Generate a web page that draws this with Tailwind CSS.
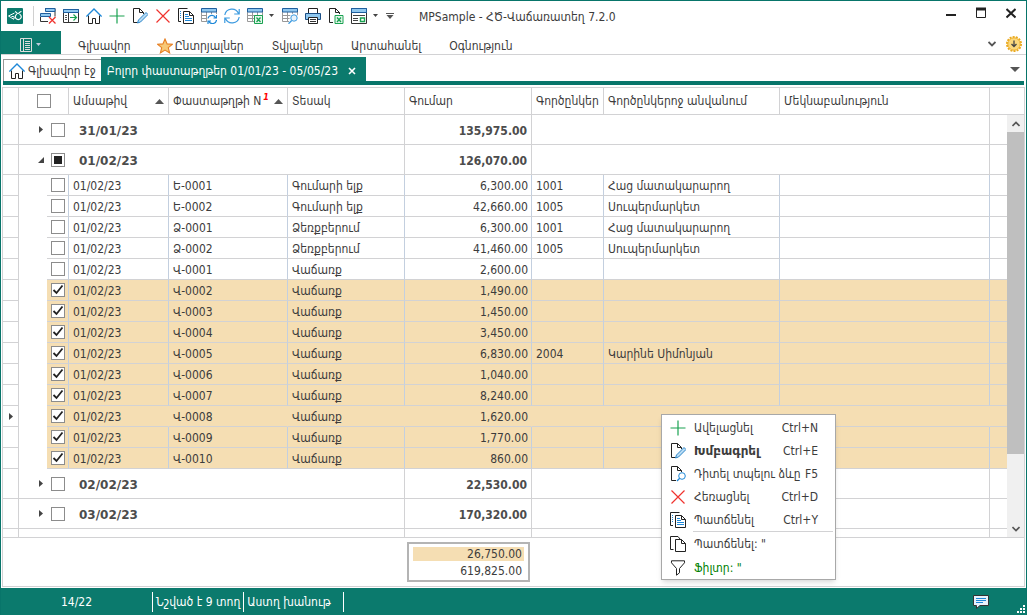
<!DOCTYPE html>
<html lang="hy">
<head>
<meta charset="utf-8">
<title>MPSample - ՀԾ-Վաճառատեղ 7.2.0</title>
<script src="https://cdn.jsdelivr.net/npm/@tailwindcss/browser@4"></script>
</head>
<body class="h-screen overflow-hidden bg-white font-['DejaVu_Sans_Condensed','DejaVu_Sans',sans-serif] text-xs text-[#3c3c3c]">

<svg class="hidden">
  <symbol id="closeall" viewBox="0 0 16 16"><path d="M5 .5h10v8" fill="none" stroke="#333"/><path d="M5.500 .5h9.500v3H5.500z" fill="#8fc7ee" stroke="#1f5f9f"/><path d="M.5 5.500h10v3H.5z" fill="#8fc7ee" stroke="#1f5f9f"/><path d="M.5 9v4.500H8" fill="none" stroke="#333"/><path d="M9 9l6.500 6.500M15.500 9L9 15.500" stroke="#f0332e" stroke-width="1.300"/></symbol>
  <symbol id="panel" viewBox="0 0 16 16"><path d="M.5 1.500h15v13H.5z" fill="#fff" stroke="#333"/><path d="M.5 1.500h15v3H.5z" fill="#8fc7ee" stroke="#1f5f9f"/><path d="M5.500 5v9" stroke="#333"/><path d="M2 7.500h2M2 9.500h2M2 11.500h2" stroke="#555"/><path d="M7 9.500h6M10.500 6.500l3 3-3 3" stroke="#1aa251" stroke-width="1.200" fill="none"/></symbol>
  <symbol id="house" viewBox="0 0 16 16"><path d="M2.500 7.500v8h4v-5h3v5h4v-8" fill="none" stroke="#222"/><path d="M.4 8.600L8 1l7.600 7.600" fill="none" stroke="#1e88d8" stroke-width="1.400"/></symbol>
  <symbol id="plus" viewBox="0 0 16 16"><path d="M8 .5v15M.5 8h15" stroke="#1aa251" stroke-width="1.200"/></symbol>
  <symbol id="edit" viewBox="0 0 16 16"><path d="M6 14.500H1.500v-14h6l4 4V6M7.500.5v4h4" fill="none" stroke="#222"/><path d="M5.500 15l1-3 7.500-7.500 2 2L8.500 14z" fill="#b9dcf4" stroke="#2a85c8"/></symbol>
  <symbol id="cross" viewBox="0 0 16 16"><path d="M1.500 1.500l13 13M14.500 1.500l-13 13" stroke="#f0332e" stroke-width="1.200"/></symbol>
  <symbol id="copyline" viewBox="0 0 16 16"><path d="M3 13.500H.5V.5h9" fill="none" stroke="#222"/><path d="M2 3.500h2M2 5.500h2M2 7.500h2M2 9.500h2" stroke="#1e88d8" stroke-dasharray="1 1"/><path d="M5.500 3.500h6l4 4v8h-10zM11.500 3.500v4h4" fill="#fff" stroke="#222"/><path d="M7 6.500h3M7 8.500h4M7 10.500h7M7 12.500h7" stroke="#1e88d8"/></symbol>
  <symbol id="copy" viewBox="0 0 16 16"><path d="M3.500 13.500H.5V.5h7.500L10 3" fill="none" stroke="#222"/><path d="M5.500 3.500h6l4 4v8h-10zM11.500 3.500v4h4" fill="#fff" stroke="#222"/></symbol>
  <symbol id="grid" viewBox="0 0 16 16"><path d="M.5 4v9.500H7M.5 7.500H15M.5 10.500H9M5.500 4v9.500M10.500 4v5M15.500 4v5" fill="none" stroke="#999"/><path d="M.5 .5h15v3.500H.5z" fill="#8fc7ee" stroke="#1f5f9f"/></symbol>
  <symbol id="gridrefresh" viewBox="0 0 16 16"><use href="#grid"/><path d="M6 6h10v10H6z" fill="#fff"/><path d="M7 10.500a4 4 0 0 1 7.500-1M15.500 7v3h-3M15.500 12a4 4 0 0 1-7.500 1.500M7 16v-3h3" fill="none" stroke="#1e88d8" stroke-width="1.200"/></symbol>
  <symbol id="refresh" viewBox="0 0 16 16"><path d="M.8 7A7.200 7.200 0 0 1 14.500 5.500M15.200 1v5h-5M15.200 9a7.200 7.200 0 0 1-13.700 1.500M.8 15v-5h5" fill="none" stroke="#3d9be0" stroke-width="1.200"/></symbol>
  <symbol id="gridx" viewBox="0 0 16 16"><use href="#grid"/><path d="M7.500 7.500h8v8h-8z" fill="#e6f6ec" stroke="#1aa251"/><path d="M9.500 9.500l4 4.500M13.500 9.500l-4 4.500" stroke="#1aa251" stroke-width="1.300"/></symbol>
  <symbol id="gridfind" viewBox="0 0 16 16"><use href="#grid"/><circle cx="12" cy="10" r="4.500" fill="#fff"/><circle cx="12" cy="10" r="3.200" fill="#e8f4fc" stroke="#3d9be0"/><path d="M9.700 12.500L6.500 15.700" stroke="#3d9be0" stroke-width="1.400"/></symbol>
  <symbol id="printer" viewBox="0 0 16 16"><path d="M3.500 5V.5h9V5" fill="#fff" stroke="#222"/><path d="M.5 5.500h15v6H.5z" fill="#8fc7ee" stroke="#1b4f86"/><path d="M3.500 9.500h9v6h-9z" fill="#fff" stroke="#222"/><path d="M5 11.500h6M5 13.500h6" stroke="#333"/></symbol>
  <symbol id="pagex" viewBox="0 0 16 16"><path d="M5 14.500H1.500v-14h6l4 4V6M7.500.5v4h4" fill="none" stroke="#222"/><path d="M7 7.500h8v8H7z" fill="#e6f6ec" stroke="#1aa251"/><path d="M9 9.500l4 4.500M13 9.500L9 14" stroke="#1aa251" stroke-width="1.300"/></symbol>
  <symbol id="pagefind" viewBox="0 0 16 16"><path d="M6 14.500H1.500v-14h6l4 4V6M7.500.5v4h4" fill="none" stroke="#222"/><circle cx="12" cy="10" r="3.300" fill="#fff" stroke="#1e88d8"/><path d="M9.700 12.300L7 15" stroke="#1e88d8" stroke-width="1.300"/></symbol>
  <symbol id="report" viewBox="0 0 16 16"><path d="M.5 .5h15v15H.5z" fill="#fff" stroke="#333"/><path d="M.5 .5h15v4H.5z" fill="#8fc7ee" stroke="#1f5f9f"/><path d="M2 7.500h12M2 10.500h5M2 12.500h5" stroke="#444"/><path d="M9.500 10h4v3.500h-4z" fill="none" stroke="#1aa251" stroke-width="1.400"/></symbol>
  <symbol id="funnel" viewBox="0 0 16 16"><path d="M1.500 .8h13v2L9.500 8.500v4.300l-3 2.400V8.500L1.500 2.800z" fill="none" stroke="#222"/></symbol>
  <symbol id="caret" viewBox="0 0 6 4"><path d="M0 0h5L2.500 3z" fill="#444"/></symbol>
</svg>

<div class="relative flex h-full flex-col border-x border-t border-[#08756a]">

  <!-- Quick access and window title -->
  <header class="flex h-8 shrink-0 items-center pb-0.5 pl-1.5 pr-2.5">
    <svg class="h-4 w-4" viewBox="0 0 16 16"><rect width="16" height="16" rx="1" fill="#0b7a6d"/><path d="M7.500 5L1.500 8l5 3.200M4.500 8.500h1.500a1.300 1.300 0 0 1 0 2.600" fill="none" stroke="#fff"/><path d="M8 3.500c1 0 1.500 2 3 2s1.500-2 3.500-2M10 6.200a3 2.800 0 1 0 2.500 0" fill="none" stroke="#fff" stroke-width="1.200"/></svg>
    <span class="ml-2.5 h-5 w-px bg-[#d0d0d0]"></span>
    <div class="ml-1.5 flex items-center gap-[7px]">
      <button aria-label="Փակել բոլորը"><svg class="h-4 w-4"><use href="#closeall"/></svg></button>
      <button aria-label="Վահանակ"><svg class="h-4 w-4"><use href="#panel"/></svg></button>
      <button aria-label="Գլխավոր էջ"><svg class="h-4 w-4"><use href="#house"/></svg></button>
      <button aria-label="Ավելացնել"><svg class="h-4 w-4"><use href="#plus"/></svg></button>
      <button aria-label="Խմբագրել"><svg class="h-4 w-4"><use href="#edit"/></svg></button>
      <button aria-label="Հեռացնել"><svg class="h-4 w-4"><use href="#cross"/></svg></button>
      <button aria-label="Պատճենել"><svg class="h-4 w-4"><use href="#copyline"/></svg></button>
      <button aria-label="Թարմացնել ցուցակը"><svg class="h-4 w-4"><use href="#gridrefresh"/></svg></button>
      <button aria-label="Թարմացնել"><svg class="h-4 w-4"><use href="#refresh"/></svg></button>
      <button class="flex items-center gap-1.5" aria-label="Արտահանել"><svg class="h-4 w-4"><use href="#gridx"/></svg><svg class="h-1 w-1.5"><use href="#caret"/></svg></button>
      <button aria-label="Որոնել"><svg class="h-4 w-4"><use href="#gridfind"/></svg></button>
      <button aria-label="Տպել"><svg class="h-4 w-4"><use href="#printer"/></svg></button>
      <button aria-label="Excel"><svg class="h-4 w-4"><use href="#pagex"/></svg></button>
      <button class="flex items-center gap-1.5" aria-label="Հաշվետվություն"><svg class="h-4 w-4"><use href="#report"/></svg><svg class="h-1 w-1.5"><use href="#caret"/></svg></button>
      <button aria-label="Կարգավորել"><svg class="h-1.5 w-2" viewBox="0 0 8 6"><path d="M0 .5h8" stroke="#555"/><path d="M.5 2h7L4 6z" fill="#555"/></svg></button>
    </div>
    <h1 class="ml-[25px] flex-1 whitespace-nowrap pt-0.5">MPSample - ՀԾ-Վաճառատեղ 7.2.0</h1>
    <div class="flex items-center gap-5 pb-1.5">
      <button aria-label="Ծալել"><svg class="h-3 w-2.5" viewBox="0 0 10 12"><path d="M0 8h10" stroke="#222" stroke-width="2"/></svg></button>
      <button aria-label="Մեծացնել"><svg class="h-3 w-2.5" viewBox="0 0 10 12"><path d="M.5 1.500h9v9h-9z" fill="none" stroke="#222"/><path d="M0 2h10" stroke="#222" stroke-width="3"/></svg></button>
      <button aria-label="Փակել"><svg class="h-3 w-2.5" viewBox="0 0 10 12"><path d="M.5 2l9 8.500M9.500 2l-9 8.500" stroke="#222" stroke-width="2"/></svg></button>
    </div>
  </header>

  <!-- Ribbon tabs -->
  <nav class="flex h-[22px] shrink-0 items-center border-b border-[#d2d2d4] pr-1">
    <button class="-mt-0.5 flex h-[23px] w-15 items-center justify-center gap-1 bg-[#0b7a6d] pt-1" aria-label="Ֆայլ"><svg class="h-3.5 w-3" viewBox="0 0 12 14"><path d="M.5 .5h11v13H.5z" fill="none" stroke="#ddd"/><path d="M3.500 0v14" stroke="#ddd"/><path d="M5 3.500h5M5 5.500h5M5 7.500h5M5 9.500h5M5 11.500h5" stroke="#ddd"/></svg><svg class="h-1 w-1.5" viewBox="0 0 6 4"><path d="M0 0h5L2.500 3z" fill="#bcd"/></svg></button>
    <div class="ml-[17px] flex flex-1 items-center gap-7 pt-1">
      <button>Գլխավոր</button>
      <button class="-ml-0.5 flex items-center gap-0.5"><svg class="h-4 w-4" viewBox="0 0 16 16"><path d="M8 1l2.100 4.900 5.200.4-4 3.400 1.300 5.200L8 12.100l-4.600 2.800 1.300-5.200-4-3.400 5.200-.4z" fill="#f7c877" stroke="#e67e22" stroke-width="1.100"/></svg>Ընտրյալներ</button>
      <button>Տվյալներ</button>
      <button>Արտահանել</button>
      <button>Օգնություն</button>
    </div>
    <button class="mr-2.5" aria-label="Ծալել ժապավենը"><svg class="h-2 w-2" viewBox="0 0 8 8"><path d="M.5 2L4 5.500 7.500 2" fill="none" stroke="#555" stroke-width="1.800"/></svg></button>
    <button aria-label="Թարմացում"><svg class="h-4 w-4" viewBox="0 0 16 16"><circle cx="8" cy="8" r="7" fill="none" stroke="#e9a91c" stroke-width="2" stroke-dasharray="2 1.140"/><circle cx="8" cy="8" r="6.200" fill="#fbd87c" stroke="#eeb02c"/><path d="M8 4.500v6M5.500 8L8 10.500 10.500 8" fill="none" stroke="#444" stroke-width="1.300"/></svg></button>
  </nav>

  <!-- Document tabs -->
  <div class="mx-0.5 flex h-[30px] shrink-0 items-end border-b-4 border-[#08756a]">
    <button class="flex h-[22px] items-center gap-[3px] whitespace-nowrap border-t border-l border-[#999] px-[5px]"><svg class="h-4 w-4"><use href="#house"/></svg>Գլխավոր էջ</button>
    <div class="flex h-6 items-center gap-2.5 bg-[#0b7a6d] pt-[3px] pl-1.5 pr-2.5 text-white">
      <button class="whitespace-nowrap">Բոլոր փաստաթղթեր 01/01/23 - 05/05/23</button>
      <button aria-label="Փակել ներդիրը"><svg class="h-2 w-2" viewBox="0 0 8 8"><path d="M1 1l6 6M7 1L1 7" stroke="#fff" stroke-width="1.600"/></svg></button>
    </div>
    <button class="mr-1 mb-2 ml-auto" aria-label="Ներդիրների ցանկ"><svg class="h-1.5 w-2.5" viewBox="0 0 10 6"><path d="M0 0h10L5 5z" fill="#555"/></svg></button>
  </div>

  <!-- Document grid -->
  <main class="mx-px mt-0.5 mb-px flex min-h-0 flex-1 flex-col border border-[#d2d2d4]">
    <div class="flex min-h-0 flex-1 overflow-hidden border-b border-[#d2d2d4]">
      <div class="min-w-0 flex-1 overflow-hidden">
        <table class="w-full table-fixed border-separate border-spacing-0 whitespace-nowrap">
          <colgroup><col class="w-4"><col class="w-7"><col class="w-[22px]"><col class="w-[100px]"><col class="w-[119px]"><col class="w-[117px]"><col class="w-[127px]"><col class="w-[72px]"><col class="w-[176px]"><col><col class="w-[17px]"></colgroup>
          <thead>
            <tr class="h-[27px] text-left *:border-r *:border-b *:border-[#d2d2d4] *:py-0 *:font-normal">
              <th></th>
              <th colspan="2"><input type="checkbox" aria-label="Նշել բոլորը" class="ml-[18px] block h-3.5 w-3.5 appearance-none border border-[#8c8c8c] bg-white"></th>
              <th class="pl-1 pr-1"><span class="flex items-center justify-between">Ամսաթիվ<svg class="h-[5px] w-[9px]" viewBox="0 0 9 5"><path d="M4.500 0L9 5H0z" fill="#555"/></svg></span></th>
              <th class="pl-1 pr-1"><span class="flex items-center justify-between">Փաստաթղթի N<sup class="top-0 -mt-2 ml-0.5 text-[9px] leading-none font-bold text-[#ff0000] italic">1</sup><svg class="ml-auto h-[5px] w-[9px]" viewBox="0 0 9 5"><path d="M4.500 0L9 5H0z" fill="#555"/></svg></span></th>
              <th class="pl-1">Տեսակ</th><th class="pl-1">Գումար</th><th class="pl-1">Գործընկեր</th><th class="pl-1">Գործընկերոջ անվանում</th><th class="pl-1">Մեկնաբանություն</th><th class="!border-r-0"></th>
            </tr>
          </thead>
          <tbody id="rows"></tbody>
        </table>
      </div>
      <div class="flex w-[17px] shrink-0 flex-col">
        <div class="h-[27px] border-b border-[#d2d2d4]"></div>
        <div class="flex flex-1 flex-col items-center bg-[#f0f0f0]">
          <button class="flex h-[17px] w-full items-center justify-center" aria-label="Վերև"><svg class="h-2 w-2" viewBox="0 0 8 8"><path d="M.5 6L4 2.500 7.500 6" fill="none" stroke="#555" stroke-width="1.600"/></svg></button>
          <div class="w-full basis-[322px] bg-[#bfbfbf]"></div>
          <button class="mt-auto flex h-[17px] w-full items-center justify-center" aria-label="Ներքև"><svg class="h-2 w-2" viewBox="0 0 8 8"><path d="M.5 2L4 5.500 7.500 2" fill="none" stroke="#555" stroke-width="1.600"/></svg></button>
        </div>
      </div>
    </div>
    <!-- Totals: checked rows, then all rows -->
    <div class="flex h-12 shrink-0 items-start pt-1">
      <dl class="ml-[404px] w-[123px] border-2 border-[#b4b4b4] px-1 text-right">
        <dd class="mt-[3px] h-3.5 bg-[#f5deb3] pr-0.5 leading-[15px]">26,750.00</dd>
        <dd class="pt-0.5 pr-0.5 pb-px leading-4">619,825.00</dd>
      </dl>
    </div>
  </main>

  <footer class="flex h-[27px] shrink-0 items-center bg-[#0b7a6d] text-white">
    <span class="w-[151px] text-center">14/22</span>
    <span class="flex h-5 items-center border-l border-white px-[3px]">Նշված է 9 տող</span>
    <span class="flex h-5 items-center border-x border-white pl-[3px] pr-3">Աստղ խանութ</span>
    <button class="mr-7 ml-auto" aria-label="Հաղորդագրություններ"><svg class="h-3.5 w-4" viewBox="0 0 16 14"><path d="M.5 .5h15v10H7L3.500 13.500v-3H.5z" fill="#e8f1fb" stroke="#333"/><path d="M3 3.500h10M3 5.500h10M3 7.500h7" stroke="#1e88d8"/></svg></button>
    <svg class="mr-px mb-0.5 h-2 w-2 self-end" viewBox="0 0 8 8"><path d="M6 0h2v2H6zM6 3h2v2H6zM3 3h2v2H3zM6 6h2v2H6zM3 6h2v2H3zM0 6h2v2H0z" fill="#fff"/></svg>
  </footer>

  <!-- Context menu -->
  <div role="menu" class="absolute top-[413px] left-[660px] w-[175px] border border-[#a8a8a8] bg-white pt-px pr-0.5 shadow-md">
    <button role="menuitem" class="flex h-[23px] w-full items-center pl-2 pr-[15px]"><svg class="mr-2 h-4 w-4"><use href="#plus"/></svg>Ավելացնել<kbd class="ml-auto font-[inherit]">Ctrl+N</kbd></button>
    <button role="menuitem" class="flex h-[23px] w-full items-center pl-2 pr-[15px]"><svg class="mr-2 h-4 w-4"><use href="#edit"/></svg><b class="font-['DejaVu_Sans',sans-serif]">Խմբագրել</b><kbd class="ml-auto font-[inherit]">Ctrl+E</kbd></button>
    <button role="menuitem" class="flex h-[23px] w-full items-center pl-2 pr-[15px] whitespace-nowrap"><svg class="mr-2 h-4 w-4"><use href="#pagefind"/></svg>Դիտել տպելու ձևը<kbd class="ml-auto font-[inherit]">F5</kbd></button>
    <button role="menuitem" class="flex h-[23px] w-full items-center pl-2 pr-[15px]"><svg class="mr-2 h-4 w-4"><use href="#cross"/></svg>Հեռացնել<kbd class="ml-auto font-[inherit]">Ctrl+D</kbd></button>
    <button role="menuitem" class="flex h-[23px] w-full items-center pl-2 pr-[15px]"><svg class="mr-2 h-4 w-4"><use href="#copyline"/></svg>Պատճենել<kbd class="ml-auto font-[inherit]">Ctrl+Y</kbd></button>
    <hr class="ml-[31px] border-[#d2d2d4]">
    <button role="menuitem" class="flex h-6 w-full items-center pl-2"><svg class="mr-2 h-4 w-4"><use href="#copy"/></svg>Պատճենել: "</button>
    <button role="menuitem" class="flex h-[23px] w-full items-center pl-2 text-[#008000]"><svg class="mr-2 h-4 w-4"><use href="#funnel"/></svg>Ֆիլտր: "</button>
  </div>
</div>

<script>
const data = [
  {group: '31/01/23', sum: '135,975.00'},
  {group: '01/02/23', sum: '126,070.00', open: true},
  ['Ե-0001', 'Գումարի ելք', '6,300.00', '1001', 'Հաց մատակարարող'],
  ['Ե-0002', 'Գումարի ելք', '42,660.00', '1005', 'Սուպերմարկետ'],
  ['Ձ-0001', 'Ձեռքբերում', '6,300.00', '1001', 'Հաց մատակարարող'],
  ['Ձ-0002', 'Ձեռքբերում', '41,460.00', '1005', 'Սուպերմարկետ'],
  ['Վ-0001', 'Վաճառք', '2,600.00', '', ''],
  ['Վ-0002', 'Վաճառք', '1,490.00', '', '', true],
  ['Վ-0003', 'Վաճառք', '1,450.00', '', '', true],
  ['Վ-0004', 'Վաճառք', '3,450.00', '', '', true],
  ['Վ-0005', 'Վաճառք', '6,830.00', '2004', 'Կարինե Սիմոնյան', true],
  ['Վ-0006', 'Վաճառք', '1,040.00', '', '', true],
  ['Վ-0007', 'Վաճառք', '8,240.00', '', '', true],
  ['Վ-0008', 'Վաճառք', '1,620.00', '', '', true, true],
  ['Վ-0009', 'Վաճառք', '1,770.00', '', '', true],
  ['Վ-0010', 'Վաճառք', '860.00', '', '', true],
  {group: '02/02/23', sum: '22,530.00'},
  {group: '03/02/23', sum: '170,320.00'},
  {group: '', sum: ''},
];
const box = (label, state) => `<span class="relative block h-3.5 w-3.5"><input type="checkbox" aria-label="${label}" ${state === 'on' ? 'checked' : ''} class="block h-3.5 w-3.5 appearance-none border border-[#8c8c8c] bg-white">${
  state === 'on' ? '<svg class="pointer-events-none absolute inset-0 h-3.5 w-3.5" viewBox="0 0 14 14"><path d="M2.500 7l3 3 6-7.500" fill="none" stroke="#222" stroke-width="1.800"/></svg>' :
  state === 'part' ? '<svg class="pointer-events-none absolute inset-0 h-3.5 w-3.5" viewBox="0 0 14 14"><path d="M3 3h8v8H3z" fill="#222"/></svg>' : ''}</span>`;
const arrow = open => open
  ? '<svg class="h-[7px] w-1.5" viewBox="0 0 6 7"><path d="M6 1v6H0z" fill="#444"/></svg>'
  : '<svg class="h-[7px] w-1.5" viewBox="0 0 6 7"><path d="M1 0l4 3.500L1 7z" fill="#444"/></svg>';
document.getElementById('rows').innerHTML = data.map(r => {
  if (!Array.isArray(r)) return `<tr class="h-[30px] *:border-b *:border-[#d2d2d4] *:py-0">
    <td class="border-r"></td>
    <td colspan="5" class="border-r"><span class="flex items-center pl-[19px]"><button aria-label="Բացել ${r.group}">${arrow(r.open)}</button><span class="ml-[7px] mr-3.5">${box('Խումբ ' + r.group, r.open ? 'part' : '')}</span><b class="pt-0.5 font-['DejaVu_Sans',sans-serif] text-[#4c4c4c]">${r.group}</b></span></td>
    <td class="border-r !pt-0.5 pr-1 text-right font-bold text-[#4c4c4c]">${r.sum}</td>
    <td colspan="3" class="border-r"></td><td></td></tr>`;
  const [no, kind, sum, code, name, on, cur] = r;
  const bg = on ? 'bg-[#f5deb3]' : '';
  const line = cur ? 'border-r border-r-transparent bg-clip-border' : 'border-r border-r-[#c3cfdf]';
  return `<tr class="h-[21px] *:border-b-[#d2d2d4] *:py-0 *:px-1">
    <td class="border-r border-b border-r-[#d2d2d4] !pl-[5px]">${cur ? arrow(false) : ''}</td><td></td>
    <td class="border-b ${bg} ${line}">${box(no, on ? 'on' : '')}</td>
    <td class="border-b !pt-0.5 ${bg} ${line}">01/02/23</td>
    <td class="border-b !pt-0.5 ${bg} ${line}">${no}</td>
    <td class="border-b !pt-0.5 ${bg} ${line}">${kind}</td>
    <td class="border-b !pt-0.5 ${bg} ${line} text-right !pr-[3px]">${sum}</td>
    <td class="border-b !pt-0.5 ${bg} ${line}">${code}</td>
    <td class="border-b !pt-0.5 ${bg} ${line}">${name}</td>
    <td class="border-b ${bg} ${line}"></td>
    <td class="border-b ${bg}"></td></tr>`;
}).join('');
</script>
</body>
</html>
